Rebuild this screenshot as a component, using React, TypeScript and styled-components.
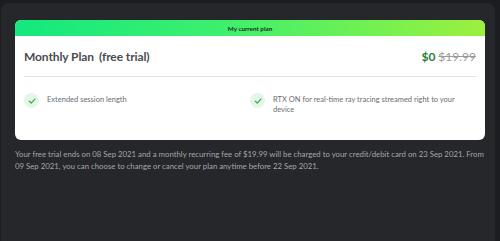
import React from "react";
import styled, { createGlobalStyle } from "styled-components";

const Global = createGlobalStyle`
  html, body { margin: 0; padding: 0; background: #1b1d20; }
  body { font-family: Lato, "Open Sans", sans-serif; -webkit-font-smoothing: antialiased; }
`;

const Panel = styled.div`
  margin: 3px 5px 0 1px;
  height: 238px;
  background: #25272b;
  border-radius: 8px 8px 0 0;
  padding: 17px 10px 0 14px;
  box-sizing: border-box;
`;

const Card = styled.div`
  background: #ffffff;
  border-radius: 6px;
  overflow: hidden;
`;

const Ribbon = styled.div`
  height: 16px;
  display: flex;
  align-items: center;
  justify-content: center;
  background: linear-gradient(90deg, #14e87e 0%, #3ef06c 45%, #9cf03e 100%);
  font-size: 6.3px;
  font-weight: 700;
  color: #1d2a1f;
`;

const Body = styled.div`
  padding: 0 9px;
`;

const TitleRow = styled.div`
  height: 40px;
  display: flex;
  align-items: center;
  justify-content: space-between;
  border-bottom: 1px solid #e4e4e4;
`;

const Title = styled.div`
  font-size: 12px;
  color: #4a4c50;
  font-weight: 700;
  letter-spacing: -0.1px;
`;

const Sub = styled.span`
  margin-left: 5px;
`;

const Price = styled.div`
  font-size: 12px;
  display: flex;
  gap: 3px;
  align-items: baseline;
`;

const Now = styled.span`
  color: #2d7d3a;
  font-weight: 700;
`;

const Was = styled.span`
  color: #9a9a9a;
  text-decoration: line-through;
`;

const Features = styled.div`
  display: grid;
  grid-template-columns: 1fr 1fr;
  padding: 16px 0 0;
  height: 63px;
  box-sizing: border-box;
`;

const Feature = styled.div`
  display: flex;
  align-items: flex-start;
  gap: 8px;
`;

const Check = styled.div`
  flex: none;
  width: 15px;
  height: 15px;
  border-radius: 50%;
  background: #e3f6e7;
  display: flex;
  align-items: center;
  justify-content: center;
`;

const FeatureText = styled.div`
  font-size: 7.5px;
  line-height: 10px;
  color: #6a6c70;
  padding-top: 2px;
  max-width: 190px;
`;

const Footer = styled.p`
  margin: 8px 0 0 0;
  font-size: 7.8px;
  line-height: 12px;
  color: #a3a6ab;
`;

const CheckIcon = () => (
  <svg width="8" height="8" viewBox="0 0 10 10">
    <path d="M1.5 5.2 L4 7.6 L8.6 2.6" fill="none" stroke="#2fb24f" strokeWidth="1.6" strokeLinecap="round" strokeLinejoin="round" />
  </svg>
);

export default function App() {
  return (
    <>
      <Global />
      <Panel>
        <Card>
          <Ribbon>My current plan</Ribbon>
          <Body>
            <TitleRow>
              <Title>
                Monthly Plan<Sub>(free trial)</Sub>
              </Title>
              <Price>
                <Now>$0</Now>
                <Was>$19.99</Was>
              </Price>
            </TitleRow>
            <Features>
              <Feature>
                <Check><CheckIcon /></Check>
                <FeatureText>Extended session length</FeatureText>
              </Feature>
              <Feature>
                <Check><CheckIcon /></Check>
                <FeatureText>RTX ON for real-time ray tracing streamed right to your device</FeatureText>
              </Feature>
            </Features>
          </Body>
        </Card>
        <Footer>
          Your free trial ends on 08 Sep 2021 and a monthly recurring fee of $19.99 will be charged to your credit/debit card on 23 Sep 2021. From 09 Sep 2021, you can choose to change or cancel your plan anytime before 22 Sep 2021.
        </Footer>
      </Panel>
    </>
  );
}
